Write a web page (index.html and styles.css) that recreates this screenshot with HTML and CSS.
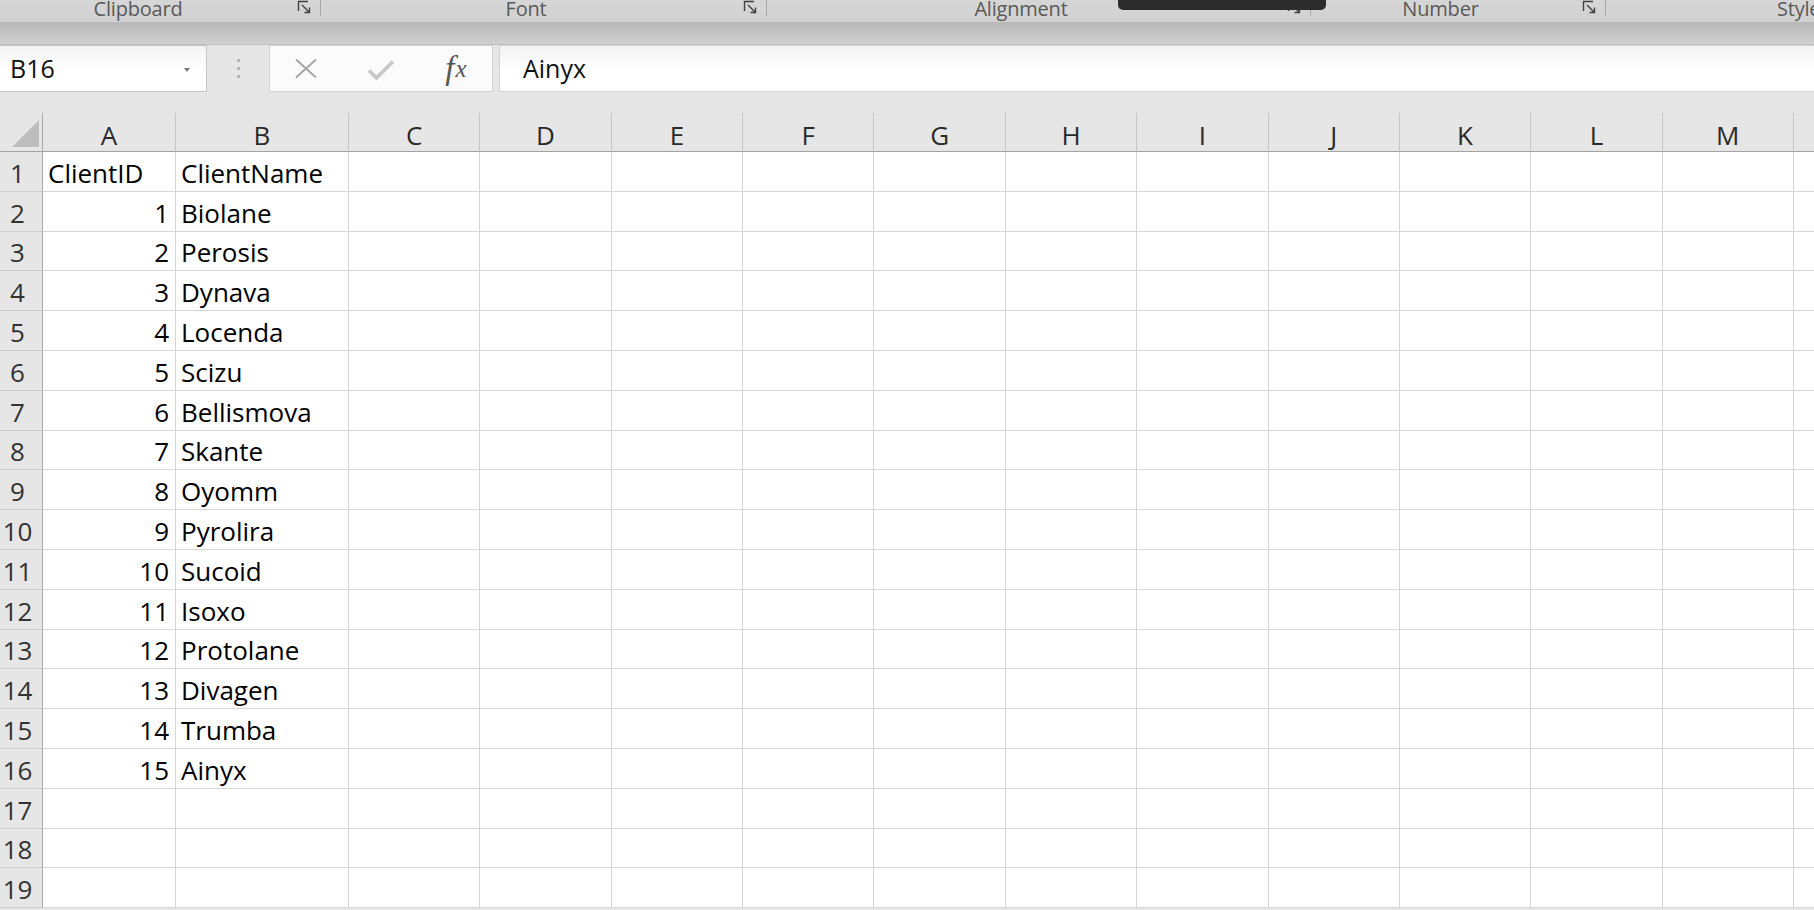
FILE: index.html
```html
<!DOCTYPE html>
<html>
<head>
<meta charset="utf-8">
<title>Excel</title>
<link rel="stylesheet" href="styles.css">
</head>
<body>
<div class="ribbon">
  <div class="group g1"><span class="glabel wide">Clipboard</span><svg class="launch" viewBox="0 0 15 15"><path d="M1.5 11V1.5H11" /><path d="M5 5L12.5 12.5M12.5 7.5V12.5H7.5" /></svg><span class="sep"></span></div>
  <div class="group g2"><span class="glabel">Font</span><svg class="launch" viewBox="0 0 15 15"><path d="M1.5 11V1.5H11" /><path d="M5 5L12.5 12.5M12.5 7.5V12.5H7.5" /></svg><span class="sep"></span></div>
  <div class="group g3"><span class="glabel">Alignment</span><svg class="launch" viewBox="0 0 15 15"><path d="M1.5 11V1.5H11" /><path d="M5 5L12.5 12.5M12.5 7.5V12.5H7.5" /></svg><span class="sep"></span></div>
  <div class="group g4"><span class="glabel">Number</span><svg class="launch" viewBox="0 0 15 15"><path d="M1.5 11V1.5H11" /><path d="M5 5L12.5 12.5M12.5 7.5V12.5H7.5" /></svg><span class="sep"></span></div>
  <div class="group g5"><span class="glabel">Styles</span></div>
</div>
<div class="tip"></div>
<div class="band"></div>
<div class="fbar">
  <div class="namebox"><span>B16</span><span class="caret"></span></div>
  <div class="grip"><i></i><i></i><i></i></div>
  <div class="btns">
    <span class="btn"><svg class="ico-x" viewBox="0 0 24 21"><path d="M2 1.5L22 19.5M22 1.5L2 19.5" /></svg></span>
    <span class="btn"><svg class="ico-ok" viewBox="0 0 28 22"><path d="M2 11.5L9.5 19L26 2.5" /></svg></span>
    <span class="btn fx"><i>f</i><i class="x">x</i></span>
  </div>
  <div class="finput">Ainyx</div>
</div>
<div class="sheet">
  <div class="corner"><svg viewBox="0 0 27 27"><polygon points="27,0 27,27 0,27" /></svg></div>
  <div class="ch">A</div><div class="ch">B</div><div class="ch">C</div><div class="ch">D</div><div class="ch">E</div><div class="ch">F</div><div class="ch">G</div><div class="ch">H</div><div class="ch">I</div><div class="ch">J</div><div class="ch">K</div><div class="ch">L</div><div class="ch">M</div><div class="ch">N</div>

  <div class="rh">1</div><div class="c">ClientID</div><div class="c">ClientName</div><div class="c"></div><div class="c"></div><div class="c"></div><div class="c"></div><div class="c"></div><div class="c"></div><div class="c"></div><div class="c"></div><div class="c"></div><div class="c"></div><div class="c"></div><div class="c"></div>
  <div class="rh">2</div><div class="c num">1</div><div class="c">Biolane</div><div class="c"></div><div class="c"></div><div class="c"></div><div class="c"></div><div class="c"></div><div class="c"></div><div class="c"></div><div class="c"></div><div class="c"></div><div class="c"></div><div class="c"></div><div class="c"></div>
  <div class="rh">3</div><div class="c num">2</div><div class="c">Perosis</div><div class="c"></div><div class="c"></div><div class="c"></div><div class="c"></div><div class="c"></div><div class="c"></div><div class="c"></div><div class="c"></div><div class="c"></div><div class="c"></div><div class="c"></div><div class="c"></div>
  <div class="rh">4</div><div class="c num">3</div><div class="c">Dynava</div><div class="c"></div><div class="c"></div><div class="c"></div><div class="c"></div><div class="c"></div><div class="c"></div><div class="c"></div><div class="c"></div><div class="c"></div><div class="c"></div><div class="c"></div><div class="c"></div>
  <div class="rh">5</div><div class="c num">4</div><div class="c">Locenda</div><div class="c"></div><div class="c"></div><div class="c"></div><div class="c"></div><div class="c"></div><div class="c"></div><div class="c"></div><div class="c"></div><div class="c"></div><div class="c"></div><div class="c"></div><div class="c"></div>
  <div class="rh">6</div><div class="c num">5</div><div class="c">Scizu</div><div class="c"></div><div class="c"></div><div class="c"></div><div class="c"></div><div class="c"></div><div class="c"></div><div class="c"></div><div class="c"></div><div class="c"></div><div class="c"></div><div class="c"></div><div class="c"></div>
  <div class="rh">7</div><div class="c num">6</div><div class="c">Bellismova</div><div class="c"></div><div class="c"></div><div class="c"></div><div class="c"></div><div class="c"></div><div class="c"></div><div class="c"></div><div class="c"></div><div class="c"></div><div class="c"></div><div class="c"></div><div class="c"></div>
  <div class="rh">8</div><div class="c num">7</div><div class="c">Skante</div><div class="c"></div><div class="c"></div><div class="c"></div><div class="c"></div><div class="c"></div><div class="c"></div><div class="c"></div><div class="c"></div><div class="c"></div><div class="c"></div><div class="c"></div><div class="c"></div>
  <div class="rh">9</div><div class="c num">8</div><div class="c">Oyomm</div><div class="c"></div><div class="c"></div><div class="c"></div><div class="c"></div><div class="c"></div><div class="c"></div><div class="c"></div><div class="c"></div><div class="c"></div><div class="c"></div><div class="c"></div><div class="c"></div>
  <div class="rh">10</div><div class="c num">9</div><div class="c">Pyrolira</div><div class="c"></div><div class="c"></div><div class="c"></div><div class="c"></div><div class="c"></div><div class="c"></div><div class="c"></div><div class="c"></div><div class="c"></div><div class="c"></div><div class="c"></div><div class="c"></div>
  <div class="rh">11</div><div class="c num">10</div><div class="c">Sucoid</div><div class="c"></div><div class="c"></div><div class="c"></div><div class="c"></div><div class="c"></div><div class="c"></div><div class="c"></div><div class="c"></div><div class="c"></div><div class="c"></div><div class="c"></div><div class="c"></div>
  <div class="rh">12</div><div class="c num">11</div><div class="c">Isoxo</div><div class="c"></div><div class="c"></div><div class="c"></div><div class="c"></div><div class="c"></div><div class="c"></div><div class="c"></div><div class="c"></div><div class="c"></div><div class="c"></div><div class="c"></div><div class="c"></div>
  <div class="rh">13</div><div class="c num">12</div><div class="c">Protolane</div><div class="c"></div><div class="c"></div><div class="c"></div><div class="c"></div><div class="c"></div><div class="c"></div><div class="c"></div><div class="c"></div><div class="c"></div><div class="c"></div><div class="c"></div><div class="c"></div>
  <div class="rh">14</div><div class="c num">13</div><div class="c">Divagen</div><div class="c"></div><div class="c"></div><div class="c"></div><div class="c"></div><div class="c"></div><div class="c"></div><div class="c"></div><div class="c"></div><div class="c"></div><div class="c"></div><div class="c"></div><div class="c"></div>
  <div class="rh">15</div><div class="c num">14</div><div class="c">Trumba</div><div class="c"></div><div class="c"></div><div class="c"></div><div class="c"></div><div class="c"></div><div class="c"></div><div class="c"></div><div class="c"></div><div class="c"></div><div class="c"></div><div class="c"></div><div class="c"></div>
  <div class="rh">16</div><div class="c num">15</div><div class="c">Ainyx</div><div class="c"></div><div class="c"></div><div class="c"></div><div class="c"></div><div class="c"></div><div class="c"></div><div class="c"></div><div class="c"></div><div class="c"></div><div class="c"></div><div class="c"></div><div class="c"></div>
  <div class="rh">17</div><div class="c"></div><div class="c"></div><div class="c"></div><div class="c"></div><div class="c"></div><div class="c"></div><div class="c"></div><div class="c"></div><div class="c"></div><div class="c"></div><div class="c"></div><div class="c"></div><div class="c"></div><div class="c"></div>
  <div class="rh">18</div><div class="c"></div><div class="c"></div><div class="c"></div><div class="c"></div><div class="c"></div><div class="c"></div><div class="c"></div><div class="c"></div><div class="c"></div><div class="c"></div><div class="c"></div><div class="c"></div><div class="c"></div><div class="c"></div>
  <div class="rh">19</div><div class="c"></div><div class="c"></div><div class="c"></div><div class="c"></div><div class="c"></div><div class="c"></div><div class="c"></div><div class="c"></div><div class="c"></div><div class="c"></div><div class="c"></div><div class="c"></div><div class="c"></div><div class="c"></div>
</div>
</body>
</html>
```

FILE: styles.css
```css
* { box-sizing: border-box; margin: 0; padding: 0; }
html, body { width: 1814px; height: 910px; overflow: hidden; }
body {
  background: #e6e6e6;
  font-family: "Open Sans", "Noto Sans", sans-serif;
  position: relative;
  color: #000;
}

/* ribbon group labels */
.ribbon {
  height: 22px;
  display: flex;
  background: linear-gradient(#d6d6d6, #d1d1d1);
  overflow: hidden;
}
.group { display: flex; align-items: flex-start; flex: none; }
.g1 { width: 321px; }
.g2 { width: 446px; }
.g3 { width: 544px; }
.g4 { width: 295px; }
.g5 { flex: 1; }
.glabel {
  flex: 1;
  text-align: center;
  font-size: 20px;
  line-height: 18px;
  padding-right: 12px;
  color: #595959;
  white-space: nowrap;
  letter-spacing: -0.2px;
}
.glabel.wide { padding-right: 21px; }
.g5 .glabel { text-align: left; padding-left: 171px; }
.launch {
  width: 15px; height: 15px; flex: none;
  fill: none; stroke: #404040; stroke-width: 1.4;
  margin-right: 8px;
}
.sep { width: 1px; height: 16px; background: #a8a8a8; flex: none; }

.tip {
  position: absolute;
  left: 1118px; top: 0;
  width: 208px; height: 10px;
  background: #2c2c2c;
  border-radius: 0 0 5px 5px;
}

.band {
  height: 23px;
  background: linear-gradient(#b7b7b7, #c6c6c6 60%, #d0d0d0);
  border-bottom: 1px solid #bfbfbf;
}

/* formula bar */
.fbar { height: 47px; display: flex; }
.namebox {
  width: 207px;
  border: 1px solid #c6c6c6;
  border-left: none;
  background: linear-gradient(#f3f3f3, #fff 55%);
  display: flex; align-items: center; justify-content: space-between;
  padding: 0 16px 0 10px;
  font-size: 25px;
  line-height: 45px;
  color: #111;
}
.caret {
  width: 0; height: 0;
  border-left: 3.5px solid transparent;
  border-right: 3.5px solid transparent;
  border-top: 4px solid #7a7a7a;
  margin-top: 2px;
}
.grip {
  width: 62px;
  display: flex; flex-direction: column; align-items: center; justify-content: center;
  gap: 5px;
}
.grip i { width: 3px; height: 3px; background: #aeaeae; border-radius: 1px; display: block; }
.btns {
  width: 224px;
  border: 1px solid #d3d3d3;
  background: #fbfbfb;
  display: flex;
}
.btn { width: 74px; display: flex; align-items: center; justify-content: center; flex: none; }
.ico-x { width: 24px; height: 21px; fill: none; stroke: #a2a2a2; stroke-width: 1.7; margin-left: -2px; }
.ico-ok { width: 28px; height: 22px; fill: none; stroke: #c6c6c6; stroke-width: 3.6; margin-top: 2px; }
.fx {
  font-family: "Liberation Serif", serif;
  font-style: italic;
  font-size: 33px;
  color: #565656;
  padding-left: 2px;
}
.fx i { font-style: italic; }
.fx .x { font-size: 25px; margin-left: 1px; }
.finput {
  flex: 1;
  margin-left: 6px;
  border: 1px solid #d3d3d3;
  border-right: none;
  background: linear-gradient(#f2f2f2, #fff 55%);
  font-size: 25px;
  line-height: 45px;
  padding-left: 23px;
  color: #111;
}

/* sheet grid */
.sheet {
  margin-top: 21px;
  display: grid;
  grid-template-columns: 43px 133px 173px repeat(11, 131.36px) 80px;
  grid-template-rows: 39px;
  grid-auto-rows: 39.8px;
  background: #fff;
}
.corner {
  background: #e6e6e6;
  border-right: 1px solid #aaaaaa;
  border-bottom: 1px solid #a3a3a3;
  display: flex; align-items: flex-end; justify-content: flex-end;
  padding: 0 3px 4px 0;
}
.corner svg { width: 27px; height: 27px; fill: #bdbdbd; }
.ch {
  background: #e6e6e6;
  border-right: 1px solid #c6c6c6;
  border-bottom: 1px solid #a3a3a3;
  display: flex; align-items: center; justify-content: center;
  font-size: 26px;
  line-height: 36px;
  padding-top: 6px;
  color: #2a2a2a;
}
.rh {
  background: #e6e6e6;
  border-right: 1px solid #aaaaaa;
  border-bottom: 1px solid #cdcdcd;
  display: flex; align-items: flex-end; justify-content: center;
  padding: 0 7px 0 0;
  font-size: 26px;
  line-height: 36px;
  color: #333;
}
.c {
  border-right: 1px solid #d6d6d6;
  border-bottom: 1px solid #d6d6d6;
  display: flex; align-items: flex-end;
  padding: 0 4px 0 5px;
  font-size: 26px;
  line-height: 36px;
  white-space: nowrap;
  overflow: hidden;
  color: #000;
}
.c.num { justify-content: flex-end; padding-right: 6px; }
```
